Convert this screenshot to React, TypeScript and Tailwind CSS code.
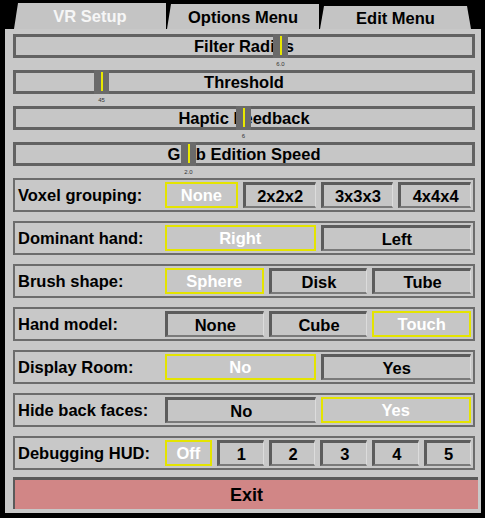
import React from 'react'

const font = { fontFamily: '"Liberation Sans", Arial, sans-serif' }

type Slider = { label: string; pos: number; value: string }

const sliders: Slider[] = [
  { label: 'Filter Radius', pos: 257, value: '6.0' },
  { label: 'Threshold', pos: 78, value: '45' },
  { label: 'Haptic Feedback', pos: 220, value: '6' },
  { label: 'Grab Edition Speed', pos: 165, value: '2.0' },
]

type Group = { label: string; options: string[]; selected: number }

const groups: Group[] = [
  { label: 'Voxel grouping:', options: ['None', '2x2x2', '3x3x3', '4x4x4'], selected: 0 },
  { label: 'Dominant hand:', options: ['Right', 'Left'], selected: 0 },
  { label: 'Brush shape:', options: ['Sphere', 'Disk', 'Tube'], selected: 0 },
  { label: 'Hand model:', options: ['None', 'Cube', 'Touch'], selected: 2 },
  { label: 'Display Room:', options: ['No', 'Yes'], selected: 0 },
  { label: 'Hide back faces:', options: ['No', 'Yes'], selected: 1 },
  { label: 'Debugging HUD:', options: ['Off', '1', '2', '3', '4', '5'], selected: 0 },
]

function Tabs() {
  return (
    <div className="flex h-[29px] items-end pl-[14px]">
      <div className="flex h-[26px] w-[152px] items-center justify-center bg-[#c4c4c4] text-[16.5px] font-bold text-[#f6f6f6] [clip-path:polygon(4px_0,100%_0,100%_100%,0_100%)]">
        VR Setup
      </div>
      <div className="ml-[1px] flex h-[25px] w-[152px] items-center justify-center bg-[#c4c4c4] pt-[1px] text-[16.5px] font-bold text-black [clip-path:polygon(4px_0,100%_0,100%_100%,0_100%)]">
        Options Menu
      </div>
      <div className="ml-[1px] flex h-[23px] w-[151px] items-center justify-center bg-[#c4c4c4] pt-[2px] text-[16.5px] font-bold text-black [clip-path:polygon(4px_0,calc(100%-4px)_0,100%_100%,0_100%)]">
        Edit Menu
      </div>
    </div>
  )
}

function SliderRow({ s }: { s: Slider }) {
  return (
    <div className="h-[36px]">
      <div className="relative flex h-[24px] items-center justify-center border-[3px] border-[#626262] bg-[#c6c6c6] text-[16.5px] font-bold text-black">
        {s.label}
        <div
          className="absolute top-[-3px] flex h-[24px] w-[15px] justify-center bg-[#6a6a6a] pt-[2px]"
          style={{ left: s.pos }}
        >
          <div className="h-[19px] w-[2px] bg-[#e8e800]" />
        </div>
      </div>
      <div className="relative h-[12px]">
        <span
          className="absolute top-[3px] w-[15px] text-center text-[6px] leading-[6px] text-[#333]"
          style={{ left: s.pos + 3 }}
        >
          {s.value}
        </span>
      </div>
    </div>
  )
}

function OptionButton({ text, selected }: { text: string; selected: boolean }) {
  if (selected) {
    return (
      <div className="flex h-[26px] flex-1 items-center justify-center border-2 border-[#e4e400] bg-[#c6c6c6] text-[16.5px] font-bold text-white">
        {text}
      </div>
    )
  }
  return (
    <div className="flex h-[26px] flex-1 items-center justify-center border-b-2 border-l-[3px] border-r border-t-[3px] border-b-[#7a7a7a] border-l-[#5c5c5c] border-r-[#dcdcdc] border-t-[#5c5c5c] bg-[#c6c6c6] pt-[2px] text-[16.5px] font-bold text-black">
      {text}
    </div>
  )
}

function GroupRow({ g }: { g: Group }) {
  return (
    <div className="flex h-[34px] items-center border-2 border-[#6c6c6c] bg-[#c8c8c8] pr-[2px]">
      <div className="w-[150px] pl-[3px] text-[16.5px] font-bold text-black">{g.label}</div>
      <div className="flex flex-1 gap-[5px]">
        {g.options.map((o, i) => (
          <OptionButton key={i} text={o} selected={i === g.selected} />
        ))}
      </div>
    </div>
  )
}

export default function App() {
  return (
    <div className="h-[518px] w-[485px] overflow-hidden bg-black" style={font}>
      <Tabs />
      <div className="ml-[5px] h-[484px] w-[476px] bg-[#c8c8c8] pl-[8px] pr-[6px] pt-[5px]">
        {sliders.map((s) => (
          <SliderRow key={s.label} s={s} />
        ))}
        <div className="flex flex-col gap-[9px]">
          {groups.map((g) => (
            <GroupRow key={g.label} g={g} />
          ))}
        </div>
        <div className="-mr-[3px] mt-[7px] flex h-[32px] items-center justify-center border-l-2 border-t-[3px] border-l-[#5a5a5a] border-t-[#5a5a5a] bg-[#d18686] pt-[2px] text-[18px] font-bold text-black">
          Exit
        </div>
      </div>
    </div>
  )
}
